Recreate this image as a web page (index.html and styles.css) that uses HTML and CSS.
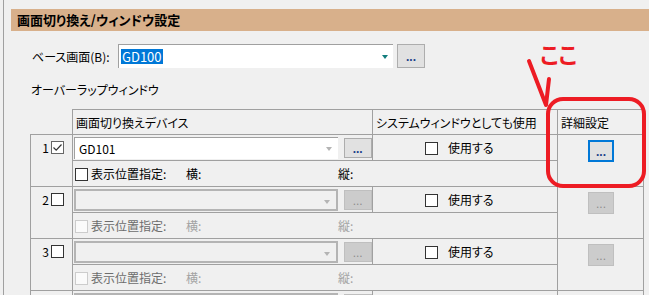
FILE: index.html
```html
<!DOCTYPE html>
<html lang="ja">
<head>
    <meta charset="UTF-8">
    <title>画面切り換え/ウィンドウ設定</title>
    <link rel="stylesheet" href="styles.css">
</head>
<body>
    <div class="panel">
        <div class="section-title">画面切り換え/ウィンドウ設定</div>

        <div class="section-body">
            <div class="base-row">
                <label class="base-label">ベース画面(B):</label>
                <div class="combo base-combo">
                    <span class="selected">GD100</span>
                    <span class="arrow teal"></span>
                </div>
                <button class="dots-btn big">...</button>
            </div>

            <div class="group-label">オーバーラップウィンドウ</div>

            <table class="overlap">
                <colgroup>
                    <col class="c-num">
                    <col class="c-device">
                    <col class="c-system">
                    <col class="c-detail">
                </colgroup>
                <tr class="head">
                    <td class="corner"></td>
                    <td>画面切り換えデバイス</td>
                    <td>システムウィンドウとしても使用</td>
                    <td>詳細設定</td>
                </tr>

                <!-- 1 -->
                <tr class="sub-top">
                    <td class="num" rowspan="2"><span class="no">1</span><span class="check checked"><svg width="11" height="11" viewBox="0 0 11 11"><path d="M1.5 5.5 L4.2 8.2 L9.5 2.5" fill="none" stroke="#333" stroke-width="1.2"/></svg></span></td>
                    <td class="device">
                        <div class="combo">GD101<span class="arrow"></span></div>
                        <button class="dots-btn">...</button>
                    </td>
                    <td class="system"><span class="check"></span>使用する</td>
                    <td class="detail" rowspan="2"><button class="dots-btn focus">...</button></td>
                </tr>
                <tr class="sub-bottom">
                    <td class="position" colspan="2">
                        <span class="check"></span><span class="pos-label">表示位置指定:</span><span class="axis">横:</span><span class="axis">縦:</span>
                    </td>
                </tr>

                <!-- 2 -->
                <tr class="sub-top">
                    <td class="num" rowspan="2"><span class="no">2</span><span class="check"></span></td>
                    <td class="device">
                        <div class="combo disabled"><span class="arrow"></span></div>
                        <button class="dots-btn disabled">...</button>
                    </td>
                    <td class="system"><span class="check"></span>使用する</td>
                    <td class="detail" rowspan="2"><button class="dots-btn disabled">...</button></td>
                </tr>
                <tr class="sub-bottom off">
                    <td class="position" colspan="2">
                        <span class="check disabled"></span><span class="pos-label">表示位置指定:</span><span class="axis">横:</span><span class="axis">縦:</span>
                    </td>
                </tr>

                <!-- 3 -->
                <tr class="sub-top">
                    <td class="num" rowspan="2"><span class="no">3</span><span class="check"></span></td>
                    <td class="device">
                        <div class="combo disabled"><span class="arrow"></span></div>
                        <button class="dots-btn disabled">...</button>
                    </td>
                    <td class="system"><span class="check"></span>使用する</td>
                    <td class="detail" rowspan="2"><button class="dots-btn disabled">...</button></td>
                </tr>
                <tr class="sub-bottom off">
                    <td class="position" colspan="2">
                        <span class="check disabled"></span><span class="pos-label">表示位置指定:</span><span class="axis">横:</span><span class="axis">縦:</span>
                    </td>
                </tr>

                <!-- 4: 枠の上端だけ見えている -->
                <tr class="sub-top">
                    <td class="num" rowspan="2"></td>
                    <td class="device">
                        <div class="combo disabled"></div>
                        <span class="btn-stub"></span>
                    </td>
                    <td class="system"></td>
                    <td class="detail" rowspan="2"></td>
                </tr>
            </table>
        </div>
    </div>

    <!-- 赤い注釈 -->
    <svg class="annotation" width="649" height="295" viewBox="0 0 649 295">
        <path d="M529 61 L546 105 M549 79 L546 105" fill="none" stroke="#ed1c24" stroke-width="4" stroke-linecap="round" stroke-linejoin="round"/>
        <rect x="548" y="99" width="96" height="87" rx="15" fill="none" stroke="#ed1c24" stroke-width="4"/>
    </svg>
    <div class="note-text">ここ</div>
</body>
</html>
```

FILE: styles.css
```css
* {
    margin: 0;
    padding: 0;
    box-sizing: border-box;
}

body {
    width: 649px;
    height: 295px;
    overflow: hidden;
    background-color: #f0f0f0;
    font-family: "Noto Sans CJK JP", sans-serif;
    font-size: 12px;
    font-feature-settings: "palt";
    color: #000;
}

.panel {
    margin-left: 3px;
    height: 100%;
    border-left: 1px solid #a0a0a0;
    padding: 9px 0 0 7px;
}

.section-title {
    height: 22px;
    line-height: 22px;
    padding-left: 6px;
    background-color: #d8b08b;
    font-size: 13px;
    font-weight: bold;
}

.section-body {
    padding-left: 20px;
}

.base-row {
    display: flex;
    align-items: center;
    margin-top: 13px;
    height: 24px;
}

.base-label {
    width: 87px;
    padding-left: 1px;
}

.combo {
    position: relative;
    display: flex;
    align-items: center;
    width: 264px;
    height: 22px;
    padding-left: 4px;
    background-color: #fff;
    border-top: 1px solid #a0a0a0;
    border-left: 1px solid #a0a0a0;
}

.base-combo {
    width: 275px;
    height: 24px;
    padding-left: 2px;
}

.selected {
    background-color: #0078d7;
    color: #fff;
    padding: 0 1px;
    line-height: 15px;
    font-size: 13px;
}

.arrow {
    position: absolute;
    right: 6px;
    top: 9px;
    border-left: 3px solid transparent;
    border-right: 3px solid transparent;
    border-top: 4px solid #b4b4b4;
}

.arrow.teal {
    right: 5px;
    top: 10px;
    border-top-color: #127d7d;
}

.combo.disabled {
    background-color: #f0f0f0;
    border: 2px solid #b4b4b4;
}

.dots-btn {
    width: 28px;
    height: 20px;
    background-color: #e1e1e1;
    border: 1px solid #adadad;
    font-family: "Liberation Sans", sans-serif;
    font-size: 12px;
    font-weight: bold;
    color: #1b3f8a;
    line-height: 10px;
    padding-top: 2px;
}

.dots-btn.big {
    width: 28px;
    height: 24px;
    margin-left: 4px;
}

.dots-btn.focus {
    width: 26px;
    height: 22px;
    border: 2px solid #0078d7;
}

.dots-btn.disabled {
    width: 26px;
    height: 22px;
    background-color: #cccccc;
    border-color: #bfbfbf;
    color: #8c8c8c;
    font-weight: normal;
}

.device .dots-btn.disabled {
    width: 28px;
    height: 20px;
}

.btn-stub {
    display: inline-block;
    vertical-align: middle;
    width: 28px;
    height: 20px;
    margin-left: 3px;
    background-color: #cccccc;
    border: 1px solid #bfbfbf;
}

.group-label {
    margin-top: 14px;
    height: 16px;
    line-height: 16px;
}

/* table */
.overlap {
    margin-top: 11px;
    margin-left: -1px;
    width: 613px;
    table-layout: fixed;
    border-collapse: collapse;
}

.c-num { width: 42px; }
.c-device { width: 300px; }
.c-system { width: 185px; }
.c-detail { width: 86px; }

.overlap td {
    border: 1px solid #a0a0a0;
    padding: 0;
    white-space: nowrap;
}

.overlap td.corner {
    border-top: none;
    border-left: none;
}

.head td {
    height: 25px;
    padding-left: 3px;
}

.sub-top td,
.sub-bottom td {
    height: 26px;
}

.num {
    vertical-align: top;
    text-align: right;
    padding: 6px 8px 0 0 !important;
}

.num .no {
    display: inline-block;
    vertical-align: top;
    line-height: 14px;
    margin-right: 2px;
}

.check {
    display: inline-block;
    width: 13px;
    height: 13px;
    border: 1px solid #333;
    background-color: #fff;
    vertical-align: top;
}

.check svg {
    display: block;
}

.check.checked {
    border-color: #666;
}

.check.disabled {
    border-color: #cccccc;
    background-color: #fafafa;
}

.device {
    padding-left: 1px !important;
}

.device .combo {
    display: inline-flex;
    vertical-align: middle;
}

.device .dots-btn {
    vertical-align: middle;
    margin-left: 3px;
}

.system {
    padding-left: 52px !important;
}

.system .check {
    vertical-align: -2px;
    margin-right: 10px;
}

.detail {
    vertical-align: top;
    padding: 5px 0 0 30px !important;
}

.position {
    padding-left: 2px !important;
}

.position .check {
    vertical-align: -2px;
    margin-right: 3px;
}

.pos-label {
    display: inline-block;
    width: 95px;
}

.axis {
    display: inline-block;
    width: 152px;
}

.off .pos-label {
    color: #6d6d6d;
}

.off .axis {
    color: #a3a3a3;
}

/* red annotation */
.annotation {
    position: absolute;
    left: 0;
    top: 0;
    pointer-events: none;
}

.note-text {
    position: absolute;
    left: 540px;
    top: 40px;
    font-size: 22px;
    font-weight: bold;
    line-height: 26px;
    color: #ed1c24;
    letter-spacing: 0;
}
```
